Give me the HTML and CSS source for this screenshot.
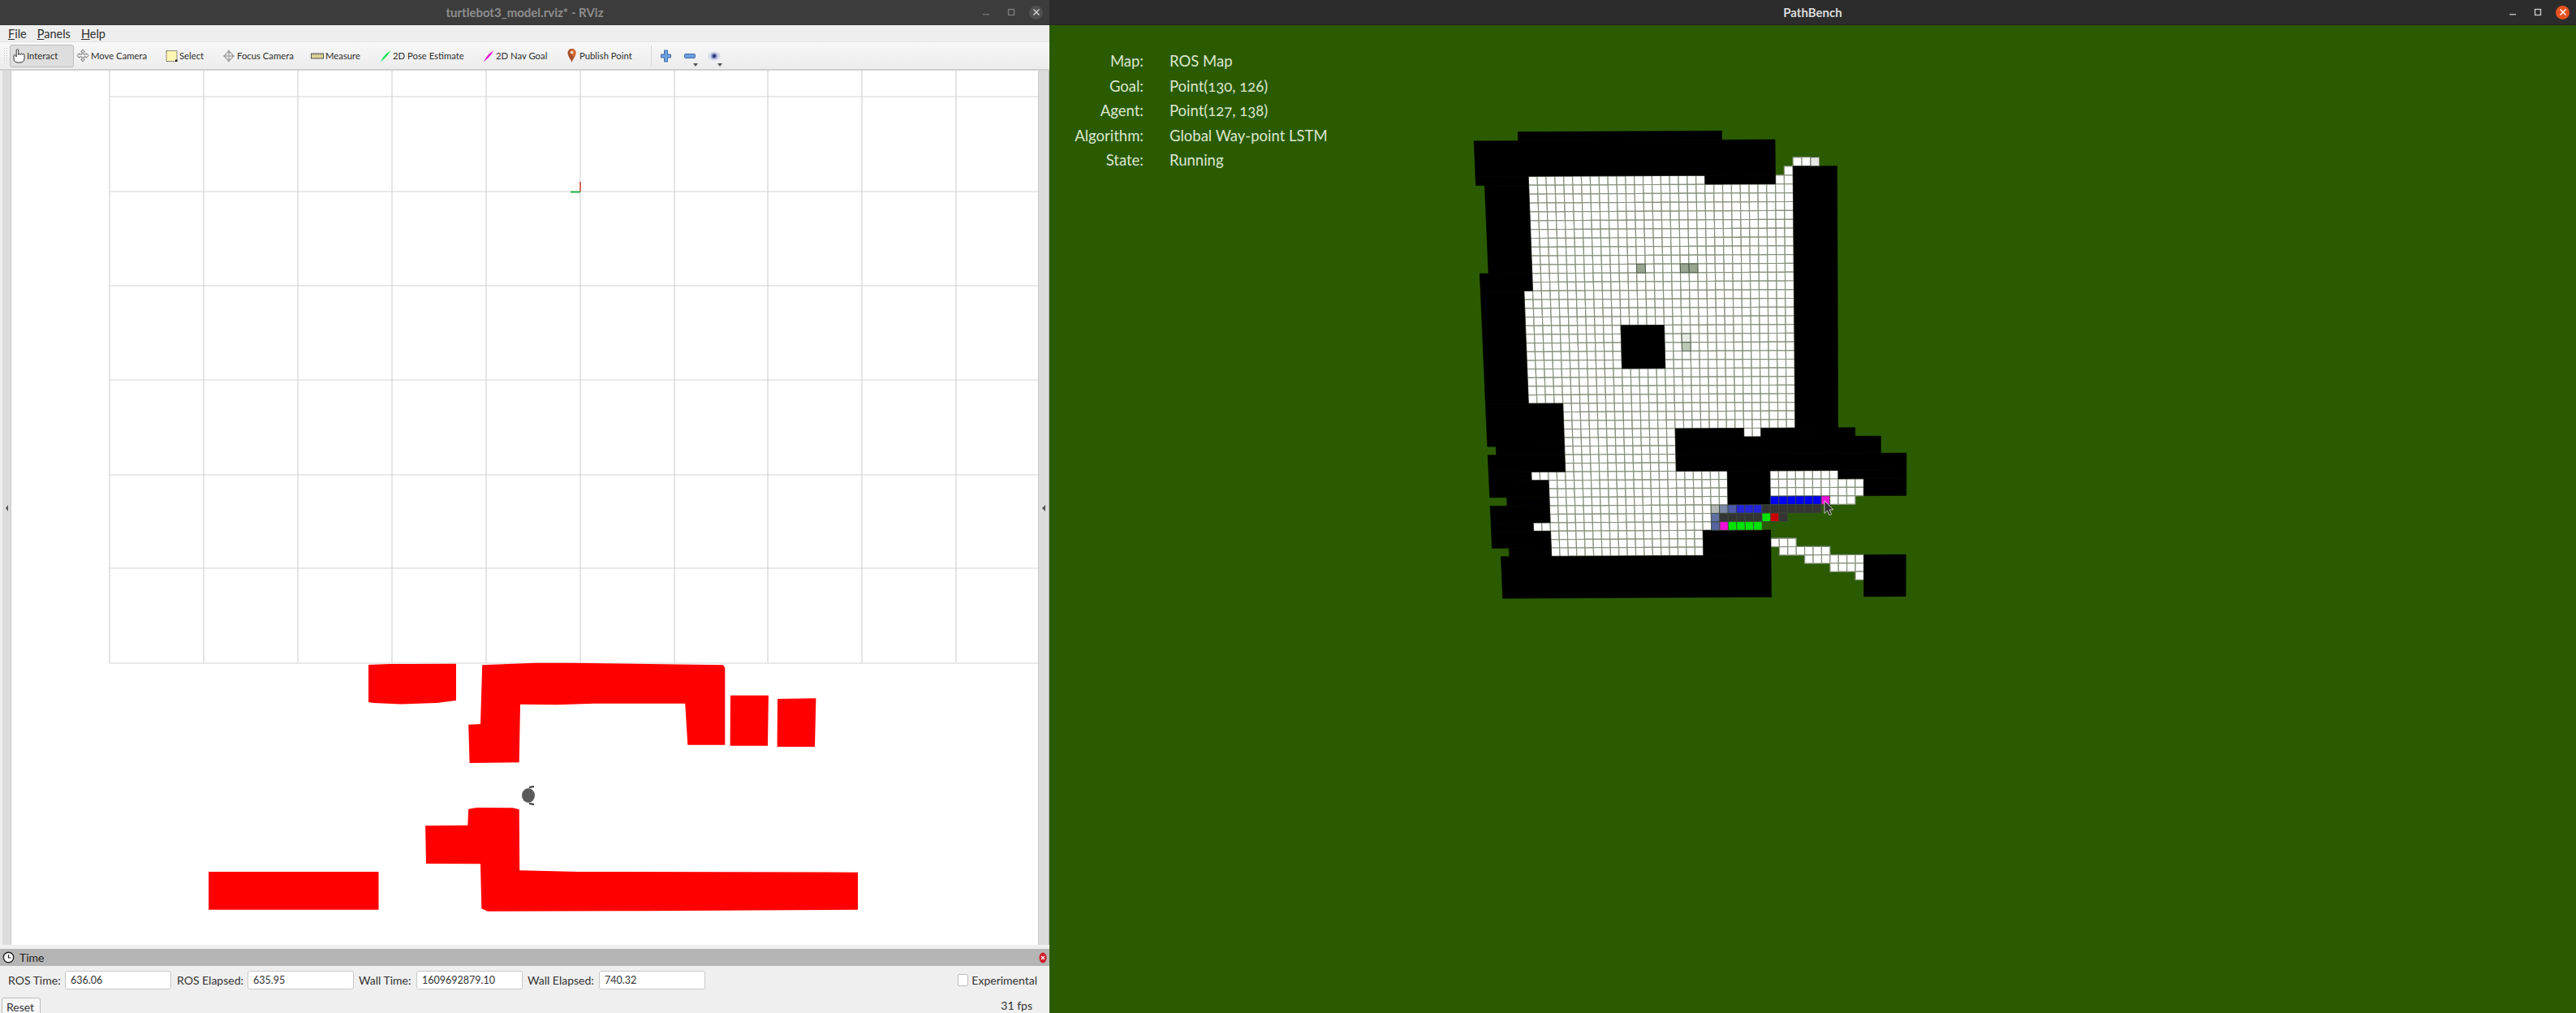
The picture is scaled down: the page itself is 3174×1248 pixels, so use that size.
FILE: index.html
```html
<!DOCTYPE html>
<html lang="en">
<head>
    <meta charset="UTF-8">
    <title>RViz and PathBench</title>
    <link rel="stylesheet" href="styles.css">
</head>
<body>
    <!-- left window: RViz -->
    <section class="window rviz">
        <header class="titlebar titlebar-idle">
            <span class="title">turtlebot3_model.rviz* - RViz</span>
            <div class="win-controls">
                <span class="win-btn"><svg width="10" height="10" viewBox="0 0 10 10"><rect x="1" y="7" width="8" height="1.5" fill="#6f6f6f"/></svg></span>
                <span class="win-btn"><svg width="10" height="10" viewBox="0 0 10 10"><rect x="1.5" y="1.5" width="7" height="7" fill="none" stroke="#7d7d7d" stroke-width="1.3"/></svg></span>
                <span class="win-btn"><span class="close-dot close-idle"><svg width="10" height="10" viewBox="0 0 10 10"><path d="M1.5 1.5l7 7M8.5 1.5l-7 7" stroke="#d0d0d0" stroke-width="1.5"/></svg></span></span>
            </div>
        </header>

        <nav class="menubar">
            <span><u>F</u>ile</span>
            <span><u>P</u>anels</span>
            <span><u>H</u>elp</span>
        </nav>

        <div class="toolbar">
            <span class="grip"></span>
            <div class="tool active">
                <svg width="17" height="20" viewBox="0 0 17 20"><path d="M2 9.5V13c0 3 2 5 5 5h3c3 0 5-2 5-5V8.500c0-1.600-2.300-1.600-2.300 0 0-1.700-2.500-1.700-2.500 0 0-1.700-2.500-1.700-2.500 0V3c0-1.800-2.500-1.800-2.500 0v8L3.600 8.800C2.800 8.200 2 8.800 2 9.500z" fill="#fff" stroke="#333" stroke-width="1"/></svg>
                Interact
            </div>
            <div class="tool">
                <svg width="16" height="17" viewBox="0 0 16 17"><path d="M8 1l2.200 2.800H9V7h3.400V5.700L15 8.500l-2.600 2.800V10H9v3.200h1.200L8 16l-2.200-2.800H7V10H3.600v1.300L1 8.500l2.600-2.800V7H7V3.800H5.800z" fill="#f4f4f4" stroke="#777" stroke-width="1"/></svg>
                Move Camera
            </div>
            <div class="tool">
                <svg width="15" height="16" viewBox="0 0 15 16"><rect x="1" y="1.5" width="13" height="13" fill="#fdf7b4" stroke="#444" stroke-width="1" stroke-dasharray="1.5 1"/><rect x="12" y="12.5" width="2.5" height="2.5" fill="#222"/></svg>
                Select
            </div>
            <div class="tool">
                <svg width="16" height="18" viewBox="0 0 16 18"><path d="M8 1l2 3H6zM8 17l-2-3h4zM.5 9l3-2v4zM15.5 9l-3 2V7z" fill="#aaa"/><circle cx="8" cy="9" r="4.7" fill="#ddd" stroke="#888"/><path d="M3 9h10M8 4v10" stroke="#999" stroke-width=".8"/></svg>
                Focus Camera
            </div>
            <div class="tool">
                <svg width="16" height="8" viewBox="0 0 16 8"><rect x=".5" y="1" width="15" height="6" fill="#dcd294" stroke="#555"/><path d="M3 1v2M6 1v2M9 1v2M12 1v2" stroke="#777" stroke-width=".8"/></svg>
                Measure
            </div>
            <div class="tool">
                <svg width="14" height="16" viewBox="0 0 14 16"><path d="M.5 15.5L4.500 9 7.500 5.500 13.500 1 10 6.500 6.500 10.500z" fill="#1fe05a"/></svg>
                2D Pose Estimate
            </div>
            <div class="tool">
                <svg width="14" height="16" viewBox="0 0 14 16"><path d="M.5 15.5L4.500 9 7.500 5.500 13.500 1 10 6.500 6.500 10.500z" fill="#e21ad2"/></svg>
                2D Nav Goal
            </div>
            <div class="tool tool-pin">
                <svg width="11" height="19" viewBox="0 0 11 19"><path d="M5.500 18C4.500 14 .5 10.500.5 6a5 5 0 0 1 10 0c0 4.500-4 8-5 12z" fill="#a9512c"/><path d="M5.500 1a5 5 0 0 1 5 5c0 2-1 4-2 5.500L5.500 9z" fill="#d9672e"/><circle cx="5.500" cy="5.500" r="2" fill="#f0d6c4"/></svg>
                Publish Point
            </div>
            <span class="tool-sep"></span>
            <span></span>
            <div class="view-tool">
                <svg width="13" height="16" viewBox="0 0 13 16"><path d="M4.500 1h4v5h4v4h-4v5h-4v-5H.5V6h4z" fill="#6f9fdc" stroke="#3f6ea8"/></svg>
            </div>
            <div class="view-tool">
                <svg width="14" height="6" viewBox="0 0 14 6"><rect x=".5" y=".5" width="13" height="5" rx="1" fill="#6f9fdc" stroke="#3f6ea8"/></svg>
                <i class="caret"></i>
            </div>
            <div class="view-tool">
                <svg width="16" height="14" viewBox="0 0 16 14"><ellipse cx="8" cy="7" rx="7.500" ry="5.500" fill="#d5d9ea"/><circle cx="8" cy="7" r="3.600" fill="#7a86c2"/><circle cx="8" cy="7" r="1.800" fill="#20285c"/></svg>
                <i class="caret"></i>
            </div>
        </div>

        <div class="main-area">
            <div class="side-handle side-left"><i class="arrow arrow-left"></i></div>
            <svg class="viewport" viewBox="14 87 1265 1077" width="1265" height="1077">
                <g class="grid-lines">
                    <path d="M135 87V817M251 87V817M367 87V817M483 87V817M599 87V817M715 87V817M831 87V817M946 87V817M1062 87V817M1178 87V817"/>
                    <path d="M135 119H1279M135 236H1279M135 352H1279M135 468H1279M135 585H1279M135 700H1279M135 817H1279"/>
                </g>
                <path d="M715 224V236" stroke="#c8402c" stroke-width="1.5"/>
                <path d="M703 236.5H715" stroke="#22b04a" stroke-width="2"/>
                <g fill="#ff0000">
                    <polygon points="454,819 480,818 562,817.7 562,863 538,866 494,867.5 460,866 454,865"/>
                    <polygon points="594.2,819.3 658.9,816.7 703.6,816.7 891,819.3 893.3,823 893.3,917.7 847.3,917.7 844.2,866.7 732.6,866.7 685.7,868.3 641,867.7 639.7,939.3 578.6,940 577.2,892.7 592,892"/>
                    <polygon points="900,856.7 946.9,856.7 946,918.7 899.6,918.7"/>
                    <polygon points="958,861 1005.4,860.3 1004,920 957.6,920"/>
                    <polygon points="577.2,996.7 587.5,995 632,995.3 639.7,997.3 640.2,1072.3 712.5,1074 1057,1074.7 1057,1120.7 792.9,1122.3 600.9,1122.7 593.3,1119.3 592,1064.3 525,1064 524.1,1017.3 576.3,1016.7"/>
                    <polygon points="257,1074 466.5,1074 466.5,1120.7 257,1120.7"/>
                </g>
                <ellipse cx="651" cy="980" rx="8" ry="9" fill="#5a5a5a"/>
                <path d="M652 970l6-1M652 990l6 1" stroke="#333" stroke-width="2"/>
            </svg>
            <div class="side-handle side-right"><i class="arrow"></i></div>
        </div>

        <div class="splitter"></div>

        <div class="dock-head">
            <svg width="15" height="15" viewBox="0 0 15 15"><circle cx="7.5" cy="7.5" r="6.2" fill="#fff" stroke="#222" stroke-width="1.4"/><path d="M7.5 4v4h3" fill="none" stroke="#222" stroke-width="1.2"/></svg>
            <span>Time</span>
            <span class="dock-close"><svg width="10" height="14" viewBox="0 0 10 14"><ellipse cx="5" cy="7" rx="4.5" ry="6.5" fill="#d01c2c"/><path d="M3 5l4 4M7 5l-4 4" stroke="#fff" stroke-width="1.2"/></svg></span>
        </div>

        <div class="dock-row">
            <label class="time-label">ROS Time:</label>
            <div class="field">636.06</div>
            <label class="time-label">ROS Elapsed:</label>
            <div class="field">635.95</div>
            <label class="time-label">Wall Time:</label>
            <div class="field">1609692879.10</div>
            <label class="time-label">Wall Elapsed:</label>
            <div class="field">740.32</div>
            <div class="experimental"><span class="checkbox"></span>Experimental</div>
        </div>

        <div class="dock-foot">
            <div class="reset">Reset</div>
            <div class="fps">31 fps</div>
        </div>
    </section>

    <!-- right window: PathBench -->
    <section class="window pathbench">
        <header class="titlebar">
            <span class="title title-focus">PathBench</span>
            <div class="win-controls">
                <span class="win-btn"><svg width="10" height="10" viewBox="0 0 10 10"><rect x="1" y="7" width="8" height="1.5" fill="#b4b4b4"/></svg></span>
                <span class="win-btn"><svg width="10" height="10" viewBox="0 0 10 10"><rect x="1.5" y="1.5" width="7" height="7" fill="none" stroke="#d0d0d0" stroke-width="1.3"/></svg></span>
                <span class="win-btn"><span class="close-dot"><svg width="10" height="10" viewBox="0 0 10 10"><path d="M1.5 1.5l7 7M8.5 1.5l-7 7" stroke="#fff" stroke-width="1.5"/></svg></span></span>
            </div>
        </header>

        <div class="scene">
            <svg class="map" viewBox="1293 31 1881 1217" width="1881" height="1217">
                <g id="mapCells"></g>
                <path class="cursor" d="M2248 617V632.5l3.600-3.300 2.400 5.500 2.700-1.100-2.400-5.500 4.700-.2z"/>
            </svg>
            <dl class="run-info">
                <dt>Map:</dt><dd>ROS Map</dd>
                <dt>Goal:</dt><dd>Point(130, 126)</dd>
                <dt>Agent:</dt><dd>Point(127, 138)</dd>
                <dt>Algorithm:</dt><dd>Global Way-point LSTM</dd>
                <dt>State:</dt><dd>Running</dd>
            </dl>
        </div>
    </section>

    <script src="map.js"></script>
</body>
</html>
```

FILE: styles.css
```css
* {
    margin: 0;
    padding: 0;
    box-sizing: border-box;
}

body {
    width: 3174px;
    height: 1248px;
    display: flex;
    overflow: hidden;
    font-family: Lato, "Noto Sans", sans-serif;
    font-size: 14px;
    color: #333;
    background: #000;
}

.window {
    display: flex;
    flex-direction: column;
    height: 1248px;
    overflow: hidden;
}

.rviz {
    width: 1293px;
    background: #efefef;
}

.pathbench {
    flex: 1;
    background: #2b5b00;
}

/* title bars */
.titlebar {
    position: relative;
    flex: 0 0 31px;
    display: flex;
    align-items: center;
    justify-content: center;
    background: #2c2c2c;
    border-bottom: 1px solid #242424;
}

.titlebar-idle {
    background: #3c3c3c;
    border-bottom-color: #333;
}

.title {
    font-size: 15px;
    font-weight: 700;
    color: #8e8e8e;
}

.title-focus {
    color: #dcdcdc;
}

.win-controls {
    position: absolute;
    top: 0;
    right: 1px;
    height: 30px;
    display: flex;
    align-items: center;
}

.win-btn {
    width: 31px;
    display: flex;
    align-items: center;
    justify-content: center;
}

.close-dot {
    width: 17px;
    height: 17px;
    border-radius: 50%;
    display: flex;
    align-items: center;
    justify-content: center;
    background: #e6521f;
}

.close-idle {
    background: #505050;
}

/* menu and toolbar */
.menubar {
    flex: 0 0 20px;
    display: flex;
    align-items: center;
    gap: 13px;
    padding-left: 10px;
    font-size: 14.5px;
    color: #2e2e2e;
    background: #eeeeee;
}

.toolbar {
    flex: 0 0 36px;
    display: grid;
    grid-template-columns: 8px 82px 110px 70px 109px 85px 127px 104px 103px 1px 2px 30px 30px 30px;
    align-items: center;
    padding-left: 4px;
    font-size: 11.3px;
    background: linear-gradient(#f8f8f8, #ececec);
    border-top: 1px solid #e2e2e2;
    border-bottom: 2px solid #cfcfcf;
}

.grip {
    width: 5px;
    height: 22px;
    background-image: radial-gradient(#cfcfcf 1px, transparent 1px);
    background-size: 3px 3px;
}

.tool {
    display: flex;
    align-items: center;
    gap: 2px;
    height: 28px;
    color: #2e2e2e;
    white-space: nowrap;
}

.tool.active {
    width: 79px;
    padding-left: 2px;
    gap: 1px;
    background: #dedede;
    border: 1px solid #bcbcbc;
    border-radius: 3px;
}

.tool-pin {
    gap: 4px;
}

.tool-sep {
    height: 26px;
    background: #d8d8d8;
}

.view-tool {
    position: relative;
    height: 28px;
    display: flex;
    align-items: center;
    justify-content: center;
}

.caret {
    position: absolute;
    right: 5px;
    bottom: 1px;
    border-left: 3px solid transparent;
    border-right: 3px solid transparent;
    border-top: 4px solid #555;
}

/* 3d view */
.main-area {
    flex: 0 0 1077px;
    display: flex;
}

.side-handle {
    display: flex;
    align-items: center;
    background: #dcdcdc;
}

.side-left {
    width: 14px;
    padding-left: 4px;
    border-left: 3px solid #efefef;
    border-right: 1px solid #c9c9c9;
}

.side-right {
    width: 14px;
    padding-left: 4px;
    border-left: 1px solid #c9c9c9;
    border-right: 1px solid #b0b0b0;
}

.arrow {
    border-top: 4px solid transparent;
    border-bottom: 4px solid transparent;
    border-right: 4px solid #555;
}

.arrow-left {
    border-right-width: 3px;
}

.viewport {
    display: block;
    background: #fff;
}

.grid-lines path {
    fill: none;
    stroke: #d4d4d4;
    stroke-width: 1.2;
}

.splitter {
    flex: 0 0 5px;
}

/* time panel */
.dock-head {
    flex: 0 0 21px;
    display: flex;
    align-items: center;
    gap: 6px;
    padding-left: 3px;
    color: #222;
    background: #b5b5b5;
}

.dock-close {
    margin-left: auto;
    margin-right: 3px;
    display: flex;
}

.dock-row {
    display: flex;
    align-items: center;
    gap: 5px;
    height: 23px;
    margin-top: 6px;
    padding: 0 15px 0 10px;
}

.time-label {
    flex: none;
    white-space: nowrap;
}

.time-label:first-child {
    width: 65px;
}

.time-label:nth-child(3) {
    width: 82px;
    margin-left: 2px;
}

.time-label:nth-child(5) {
    width: 66px;
    margin-left: 1px;
}

.time-label:nth-child(7) {
    width: 83px;
    margin-left: 1px;
}

.field {
    flex: none;
    width: 131px;
    height: 23px;
    line-height: 21px;
    padding-left: 6px;
    font-size: 12.5px;
    background: #fff;
    border: 1px solid #c9c9c9;
    border-radius: 3px;
}

.experimental {
    margin-left: auto;
    display: flex;
    align-items: center;
    gap: 4px;
}

.checkbox {
    width: 13px;
    height: 15px;
    background: #fff;
    border: 1px solid #bcbcbc;
    border-radius: 2px;
}

.dock-foot {
    display: flex;
    justify-content: space-between;
    margin-top: 10px;
    padding: 0 21px 0 2px;
}

.reset {
    width: 48px;
    height: 30px;
    padding: 4px 0 0 5px;
    line-height: 14px;
    background: #f7f7f7;
    border: 1px solid #bcbcbc;
    border-radius: 3px;
}

.fps {
    line-height: 20px;
}

/* pathbench scene */
.scene {
    position: relative;
    flex: 1;
}

.map {
    position: absolute;
    top: 0;
    left: 0;
}

.cursor {
    fill: #333;
    stroke: #e4e4e4;
    stroke-width: .8;
}

.run-info {
    position: relative;
    display: grid;
    grid-template-columns: 116px auto;
    column-gap: 32px;
    grid-auto-rows: 30.5px;
    align-items: center;
    justify-content: start;
    padding-top: 29px;
    font-size: 18.5px;
    font-variant-numeric: oldstyle-nums;
    color: #dbe6d0;
}

.run-info dt {
    text-align: right;
}
```

FILE: map.js
```js
// Occupancy map of the PathBench scene. The picture is a slightly warped
// stitch, so every cell goes through warp() instead of a plain grid.
const NS = 'http://www.w3.org/2000/svg';
const holder = document.getElementById('mapCells');

function warp(c, r) {
    const spacing = 10.87 - 0.0107 * r;
    const x = 1883.2 + 0.411 * r + c * spacing;
    const y = 217.3 + 10.94 * r - 0.0068 * r * r - 0.005 * (x - 1883);
    return [x, y];
}

function quad(c1, r1, c2, r2) {
    return [warp(c1, r1), warp(c2, r1), warp(c2, r2), warp(c1, r2)]
        .map(p => p[0].toFixed(1) + ',' + p[1].toFixed(1))
        .join(' ');
}

function add(points, fill, stroke, width) {
    const el = document.createElementNS(NS, 'polygon');
    el.setAttribute('points', points);
    el.setAttribute('fill', fill);
    el.setAttribute('stroke', stroke);
    el.setAttribute('stroke-width', width);
    holder.appendChild(el);
}

// [firstRow, lastRow, firstCol, lastCol]
const freeCells = [
    [0, 0, 0, 19], [0, 0, 28, 29], [-1, -1, 29, 29], [-2, -2, 30, 31],
    [1, 12, 0, 29], [13, 25, -1, 29], [26, 28, 3, 29],
    [29, 33, 3, 15], [29, 29, 24, 25],
    [34, 34, -1, 21], [35, 37, 1, 21], [38, 39, 1, 19], [40, 40, -1, 19], [41, 43, 1, 18],
    [34, 34, 27, 34], [35, 36, 27, 37], [37, 37, 34, 36],
    [42, 42, 27, 29], [43, 43, 28, 33], [44, 44, 31, 37], [45, 45, 34, 37], [46, 46, 37, 37]
];

const walls = [
    [-5, -5, -1, 21], [-4, -1, -6, 27], [-1, 28, 30, 34],
    [0, 0, -6, -1], [0, 0, 20, 27],
    [1, 10, -5, -1], [11, 12, -6, -1], [13, 25, -6, -2], [17, 21, 10, 14],
    [26, 30, -6, 2], [31, 31, -5, 2], [32, 33, -6, 2], [34, 34, -6, -2], [35, 36, -6, 0],
    [37, 37, -4, 0], [38, 39, -6, 0], [40, 40, -6, -2], [41, 42, -6, 0], [43, 43, -4, 0],
    [44, 48, -5, 26], [41, 43, 19, 26], [44, 48, 38, 42],
    [29, 29, 16, 23], [29, 29, 26, 36], [30, 31, 16, 39], [32, 33, 16, 42],
    [34, 37, 22, 26], [34, 34, 35, 42], [35, 36, 38, 42]
];

// [row, firstCol, lastCol, colour]
const painted = [
    [-2, 32, 32, '#e4e6e2'],
    [10, 12, 12, '#98a690'], [10, 17, 18, '#98a690'],
    [18, 17, 17, '#e6eae4'], [19, 17, 17, '#bcc8b6'],
    [37, 27, 32, '#0000f0'], [37, 33, 33, '#f010d8'],
    [38, 20, 20, '#b2b6b2'], [38, 21, 21, '#7c88aa'], [38, 22, 22, '#4e5aaa'],
    [38, 23, 25, '#2424d8'], [38, 26, 32, '#343434'],
    [39, 20, 20, '#60709f'], [39, 21, 25, '#343434'], [39, 26, 26, '#00e400'],
    [39, 27, 27, '#cc0000'], [39, 28, 28, '#343434'],
    [40, 20, 20, '#56649f'], [40, 21, 21, '#f010d8'], [40, 22, 25, '#00e400']
];

freeCells.forEach(([r1, r2, c1, c2]) => {
    for (let r = r1; r <= r2; r++) {
        for (let c = c1; c <= c2; c++) {
            add(quad(c, r, c + 1, r + 1), '#ffffff', '#87917f', 1.2);
        }
    }
});

walls.forEach(([r1, r2, c1, c2]) => {
    add(quad(c1, r1, c2 + 1, r2 + 1), '#000000', '#000000', 0.5);
});

painted.forEach(([r, c1, c2, colour]) => {
    for (let c = c1; c <= c2; c++) {
        add(quad(c, r, c + 1, r + 1), colour, '#3b4a3a', 0.8);
    }
});
```
